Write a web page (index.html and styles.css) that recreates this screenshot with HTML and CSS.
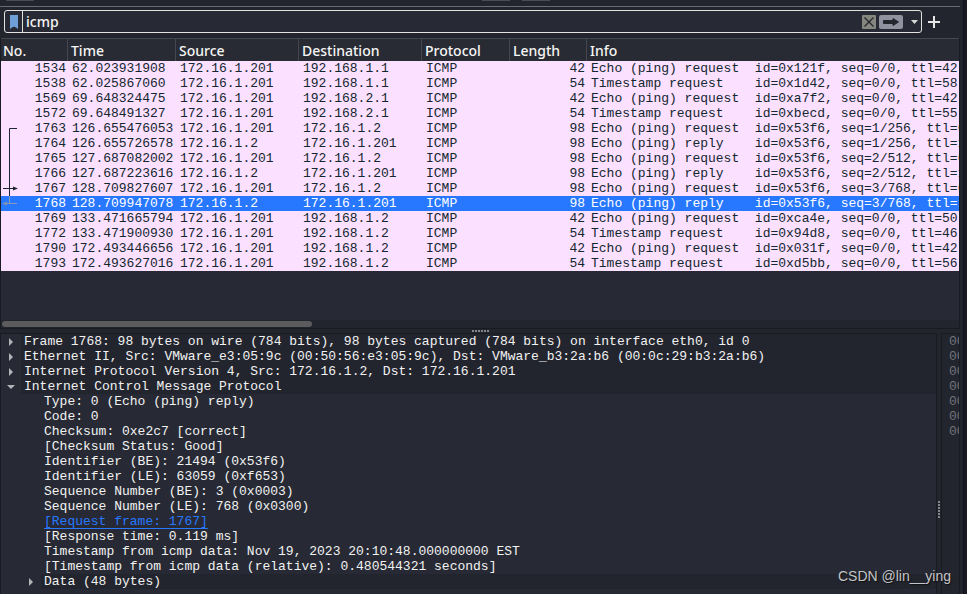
FILE: index.html
```html
<!DOCTYPE html>
<html lang="en">
<head>
    <meta charset="UTF-8">
    <meta name="viewport" content="width=device-width, initial-scale=1.0">
    <title>Packet Capture</title>
    <link rel="stylesheet" href="styles.css">
</head>
<body>
    <main class="window">
        <!-- Bottom edge of the toolbar -->
        <div class="toolbar">
            <span class="tool"></span>
            <span class="tool tool-mid"></span>
            <span class="tool"></span>
        </div>

        <form class="filter-bar">
            <div class="filter-box">
                <button type="button" class="bookmark" aria-label="Bookmarks">
                    <svg width="8" height="14" viewBox="0 0 8 14"><path d="M0 0h8v14L6 12.500C5 11.500 3 11.500 2 12.500L0 14z" fill="#6f9fd8"/></svg>
                </button>
                <input class="filter-input" type="text" value="icmp" aria-label="Display filter">
                <button type="button" class="clear" aria-label="Clear">
                    <svg width="14" height="14" viewBox="0 0 14 14"><rect width="14" height="14" rx="1" fill="#85877f"/><path d="M2.500 2.500l9 9M11.500 2.500l-9 9" stroke="#24262e" stroke-width="1.300"/></svg>
                </button>
                <button type="submit" class="apply" aria-label="Apply">
                    <svg width="24" height="14" viewBox="0 0 24 14"><rect width="24" height="14" rx="2" fill="#9092a0"/><path d="M4.500 5.500H14V3.500l5.500 3.500-5.500 3.500V8.500H4.500z" fill="#24262e" stroke="#24262e" stroke-linejoin="round"/></svg>
                </button>
                <button type="button" class="recent" aria-label="Recent filters">
                    <svg width="7" height="4" viewBox="0 0 7 4"><path d="M0 0h7L3.500 4z" fill="#d8d8d8"/></svg>
                </button>
            </div>
            <button type="button" class="add" aria-label="Add filter">
                <svg width="12" height="12" viewBox="0 0 12 12"><path d="M6 0v12M0 6h12" stroke="#e6e6e6" stroke-width="2"/></svg>
            </button>
        </form>

        <section class="packets">
            <table class="packet-table">
                <colgroup>
                    <col class="col-no">
                    <col class="col-time">
                    <col class="col-addr">
                    <col class="col-addr">
                    <col class="col-proto">
                    <col class="col-len">
                    <col>
                </colgroup>
                <thead>
                    <tr><th>No.</th><th>Time</th><th>Source</th><th>Destination</th><th>Protocol</th><th>Length</th><th>Info</th></tr>
                </thead>
                <tbody>
                    <tr><td>1534</td><td>62.023931908</td><td>172.16.1.201</td><td>192.168.1.1</td><td>ICMP</td><td>42</td><td>Echo (ping) request  id=0x121f, seq=0/0, ttl=42</td></tr>
                    <tr><td>1538</td><td>62.025867060</td><td>172.16.1.201</td><td>192.168.1.1</td><td>ICMP</td><td>54</td><td>Timestamp request    id=0x1d42, seq=0/0, ttl=58</td></tr>
                    <tr><td>1569</td><td>69.648324475</td><td>172.16.1.201</td><td>192.168.2.1</td><td>ICMP</td><td>42</td><td>Echo (ping) request  id=0xa7f2, seq=0/0, ttl=42</td></tr>
                    <tr><td>1572</td><td>69.648491327</td><td>172.16.1.201</td><td>192.168.2.1</td><td>ICMP</td><td>54</td><td>Timestamp request    id=0xbecd, seq=0/0, ttl=55</td></tr>
                    <tr><td>1763</td><td>126.655476053</td><td>172.16.1.201</td><td>172.16.1.2</td><td>ICMP</td><td>98</td><td>Echo (ping) request  id=0x53f6, seq=1/256, ttl=64</td></tr>
                    <tr><td>1764</td><td>126.655726578</td><td>172.16.1.2</td><td>172.16.1.201</td><td>ICMP</td><td>98</td><td>Echo (ping) reply    id=0x53f6, seq=1/256, ttl=128</td></tr>
                    <tr><td>1765</td><td>127.687082002</td><td>172.16.1.201</td><td>172.16.1.2</td><td>ICMP</td><td>98</td><td>Echo (ping) request  id=0x53f6, seq=2/512, ttl=64</td></tr>
                    <tr><td>1766</td><td>127.687223616</td><td>172.16.1.2</td><td>172.16.1.201</td><td>ICMP</td><td>98</td><td>Echo (ping) reply    id=0x53f6, seq=2/512, ttl=128</td></tr>
                    <tr><td>1767</td><td>128.709827607</td><td>172.16.1.201</td><td>172.16.1.2</td><td>ICMP</td><td>98</td><td>Echo (ping) request  id=0x53f6, seq=3/768, ttl=64</td></tr>
                    <tr class="selected"><td>1768</td><td>128.709947078</td><td>172.16.1.2</td><td>172.16.1.201</td><td>ICMP</td><td>98</td><td>Echo (ping) reply    id=0x53f6, seq=3/768, ttl=128</td></tr>
                    <tr><td>1769</td><td>133.471665794</td><td>172.16.1.201</td><td>192.168.1.2</td><td>ICMP</td><td>42</td><td>Echo (ping) request  id=0xca4e, seq=0/0, ttl=50</td></tr>
                    <tr><td>1772</td><td>133.471900930</td><td>172.16.1.201</td><td>192.168.1.2</td><td>ICMP</td><td>54</td><td>Timestamp request    id=0x94d8, seq=0/0, ttl=46</td></tr>
                    <tr><td>1790</td><td>172.493446656</td><td>172.16.1.201</td><td>192.168.1.2</td><td>ICMP</td><td>42</td><td>Echo (ping) request  id=0x031f, seq=0/0, ttl=42</td></tr>
                    <tr><td>1793</td><td>172.493627016</td><td>172.16.1.201</td><td>192.168.1.2</td><td>ICMP</td><td>54</td><td>Timestamp request    id=0xd5bb, seq=0/0, ttl=56</td></tr>
                </tbody>
            </table>
            <!-- Lines that join the related packets -->
            <svg class="related" width="20" height="90" viewBox="0 0 20 90" fill="none">
                <path d="M16 7.500H8.500V75M2 67.500H13" stroke="#1d2533"/>
                <path d="M12 65.500l5 2-5 2z" fill="#1d2533"/>
                <path d="M8.500 75v7.500M4 82.500H16" stroke="#8b98b5"/>
                <path d="M6 80.500l-5 2 5 2z" fill="#7f90b8"/>
            </svg>
            <div class="scrollbar"><div class="thumb"></div></div>
        </section>

        <div class="splitter"><span class="grip"></span></div>

        <div class="lower">
            <section class="details">
                <ul class="tree">
                    <li class="branch"><button type="button" class="arrow" aria-label="Expand"></button><span>Frame 1768: 98 bytes on wire (784 bits), 98 bytes captured (784 bits) on interface eth0, id 0</span></li>
                    <li class="branch"><button type="button" class="arrow" aria-label="Expand"></button><span>Ethernet II, Src: VMware_e3:05:9c (00:50:56:e3:05:9c), Dst: VMware_b3:2a:b6 (00:0c:29:b3:2a:b6)</span></li>
                    <li class="branch"><button type="button" class="arrow" aria-label="Expand"></button><span>Internet Protocol Version 4, Src: 172.16.1.2, Dst: 172.16.1.201</span></li>
                    <li class="branch"><button type="button" class="arrow open" aria-label="Collapse"></button><span>Internet Control Message Protocol</span></li>
                    <li>
                        <ul class="tree fields">
                            <li>Type: 0 (Echo (ping) reply)</li>
                            <li>Code: 0</li>
                            <li>Checksum: 0xe2c7 [correct]</li>
                            <li>[Checksum Status: Good]</li>
                            <li>Identifier (BE): 21494 (0x53f6)</li>
                            <li>Identifier (LE): 63059 (0xf653)</li>
                            <li>Sequence Number (BE): 3 (0x0003)</li>
                            <li>Sequence Number (LE): 768 (0x0300)</li>
                            <li><a href="#">[Request frame: 1767]</a></li>
                            <li>[Response time: 0.119 ms]</li>
                            <li>Timestamp from icmp data: Nov 19, 2023 20:10:48.000000000 EST</li>
                            <li>[Timestamp from icmp data (relative): 0.480544321 seconds]</li>
                        </ul>
                    </li>
                    <li class="branch nested"><button type="button" class="arrow" aria-label="Expand"></button><span>Data (48 bytes)</span></li>
                </ul>
            </section>
            <div class="splitter vertical"><span class="grip"></span></div>
            <section class="bytes">
                <div>0000</div>
                <div>0010</div>
                <div>0020</div>
                <div>0030</div>
                <div>0040</div>
                <div>0050</div>
                <div>0060</div>
            </section>
        </div>
    </main>
    <div class="watermark">CSDN @lin__ying</div>
</body>
</html>
```

FILE: styles.css
```css
* {
    box-sizing: border-box;
}

/* Body styling */
body {
    margin: 0;
    height: 100vh;
    padding-right: 3px;
    overflow: hidden;
    background-color: #191824;
    color: #f2f2f2;
    font: 13px/15px "Liberation Mono", monospace;
}

button {
    display: flex;
    align-items: center;
    justify-content: center;
    padding: 0;
    border: none;
    background: none;
}

svg {
    display: block;
}

.window {
    display: flex;
    flex-direction: column;
    height: 100%;
    padding-right: 3px;
    background-color: #23252e;
    border-right: 1px solid #11111a;
}

/* Toolbar */
.toolbar {
    display: flex;
    gap: 12px;
    height: 7px;
    padding-left: 6px;
    border-bottom: 1px solid #6b6973;
}

.tool {
    width: 28px;
    height: 1px;
    background-color: #4a4c54;
}

.tool-mid {
    margin-left: 436px;
}

/* Filter bar */
.filter-bar {
    display: flex;
    align-items: center;
    gap: 6px;
    height: 29px;
    padding: 0 20px 0 4px;
}

.filter-box {
    display: flex;
    flex: 1;
    align-items: center;
    height: 23px;
    padding-right: 3px;
    border: 1px solid #e4e2dc;
    border-radius: 3px;
    background-color: #272a34;
}

.bookmark {
    width: 18px;
    height: 100%;
    border-right: 1px solid #e4e2dc;
}

.filter-input {
    flex: 1;
    min-width: 0;
    padding: 0 3px;
    border: none;
    outline: none;
    background: none;
    color: #f5f5f5;
    font: 500 14px "Noto Sans", sans-serif;
}

.apply {
    margin: 0 8px 0 3px;
}

/* Packet list */
.packets {
    position: relative;
    display: flex;
    flex-direction: column;
    height: 291px;
    margin-top: 2px;
    border: solid #191b22;
    border-width: 0 1px 1px;
    background-color: #272a34;
    overflow: hidden;
}

.packet-table {
    width: 100%;
    table-layout: fixed;
    border-collapse: separate;
    border-spacing: 0;
}

.col-no {
    width: 67px;
}

.col-time {
    width: 108px;
}

.col-addr {
    width: 123px;
}

.col-proto {
    width: 88px;
}

.col-len {
    width: 77px;
}

th {
    height: 23px;
    padding: 0 3px;
    border: solid #44474f;
    border-width: 1px 1px 0 0;
    background-color: #282b33;
    color: #f5f5f5;
    font: 500 14px/21px "Noto Sans", sans-serif;
    text-align: left;
}

th:first-child {
    padding-left: 2px;
}

th:last-child {
    border-right: none;
}

td {
    height: 15px;
    padding: 0 3px 0 4px;
    overflow: hidden;
    background-color: #fce0ff;
    color: #12272e;
    white-space: pre;
}

td:last-child {
    padding-right: 0;
}

td:nth-child(1),
td:nth-child(6) {
    padding-right: 2px;
    text-align: right;
}

.selected td {
    background-color: #2777ff;
    color: #fff;
}

.related {
    position: absolute;
    top: 83px;
    left: 0;
}

.scrollbar {
    margin-top: auto;
    padding: 1px;
    background-color: #23252e;
}

.thumb {
    width: 310px;
    height: 6px;
    border-radius: 3px;
    background-color: #5b5b5e;
}

/* Splitters */
.splitter {
    display: flex;
    flex: none;
    align-items: center;
    justify-content: center;
    height: 4px;
}

.grip {
    width: 17px;
    height: 2px;
    background: repeating-linear-gradient(90deg, #85868b 0 2px, transparent 2px 3px);
}

.vertical {
    width: 4px;
    height: auto;
    padding-top: 92px;
}

.vertical .grip {
    width: 2px;
    height: 17px;
    background: repeating-linear-gradient(#85868b 0 2px, transparent 2px 3px);
}

/* Packet details and bytes */
.lower {
    display: flex;
    flex: 1;
    min-height: 0;
}

.details {
    flex: 1;
    min-width: 0;
    overflow: hidden;
    border: solid #191b22;
    border-width: 1px 1px 0;
    background-color: #272a34;
}

.tree {
    margin: 0;
    padding: 0;
    list-style: none;
}

.fields {
    padding-left: 43px;
}

.fields a {
    color: #2777ff;
    text-underline-offset: 3px;
}

.branch {
    display: flex;
}

.branch span {
    flex: 1;
    padding-left: 3px;
    background-color: #23252e;
    white-space: nowrap;
}

.nested {
    padding-left: 20px;
}

.arrow {
    width: 20px;
    height: 15px;
}

.arrow::before {
    content: "";
    border: solid transparent;
    border-width: 4px 0 4px 4px;
    border-left-color: #b4b4b8;
}

.arrow.open::before {
    border-width: 4px 4px 0;
    border-color: #b4b4b8 transparent transparent;
}

.bytes {
    width: 19px;
    padding-left: 7px;
    overflow: hidden;
    border: solid #191b22;
    border-width: 1px 1px 0;
    color: #71737a;
}

.watermark {
    position: absolute;
    right: 16px;
    bottom: 8px;
    color: #c4c5c8;
    font: 14px/20px "Liberation Sans", sans-serif;
    text-shadow: 1px 1px 1px #111;
}
```
